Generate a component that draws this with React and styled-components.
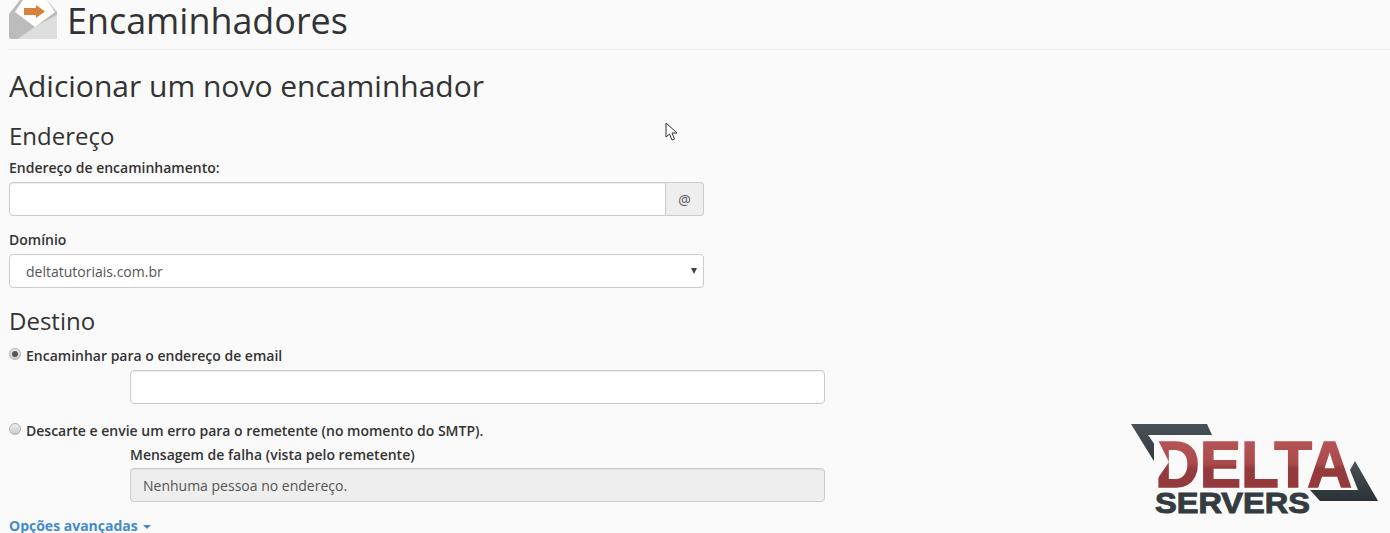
import React from "react";
import styled, { createGlobalStyle } from "styled-components";

const Global = createGlobalStyle`
  html, body { margin: 0; padding: 0; height: 533px; overflow: hidden; background: #fafafa; }
  * { box-sizing: border-box; }
  body { font-family: "Open Sans", "Liberation Sans", sans-serif; color: #333; font-size: 14px; }
`;
const Page = styled.div`position: relative; width: 1390px; height: 533px; overflow: hidden; padding: 0 0 0 9px;`;
const Header = styled.header`display: flex; align-items: flex-start; height: 50px; border-bottom: 1px solid #eee; gap: 10px;`;
const Title = styled.h1`margin: 0; font-size: 35.9px; font-weight: 400; line-height: 42px; color: #333;`;
const Heading = styled.h2`margin: 19px 0 0; font-size: 30px; font-weight: 400; line-height: 34px; color: #333;`;
const Section = styled.h3`margin: ${p => p.$top}px 0 0; font-size: 24px; font-weight: 400; line-height: 30px; color: #333;`;
const Label = styled.label`display: block; font-weight: 600; font-size: 14px; line-height: 20px; margin-top: ${p => p.$top || 0}px; margin-left: ${p => p.$left || 0}px;`;
const Group = styled.div`display: flex; width: 695px; height: 34px; margin-top: 4px;`;
const Input = styled.div`flex: 1; background: #fff; border: 1px solid #ccc; border-radius: 4px 0 0 4px; box-shadow: inset 0 1px 1px rgba(0,0,0,.075);`;
const Addon = styled.div`width: 38px; display: flex; align-items: center; justify-content: center; background: #eee; border: 1px solid #ccc; border-left: 0; border-radius: 0 4px 4px 0; color: #555; font-size: 14px;`;
const Select = styled.div`position: relative; width: 695px; height: 34px; margin-top: 4px; background: #fff; border: 1px solid #ccc; border-radius: 4px; padding: 0 16px; line-height: 33px; color: #555;
  &::after { content: ""; position: absolute; right: 6px; top: 13px; border: 3.5px solid transparent; border-top: 6px solid #444; border-bottom: 0; }`;
const Radio = styled.div`display: flex; align-items: center; gap: 5px; font-weight: 600; line-height: 20px; margin-top: ${p => p.$top}px;`;
const Dot = styled.span`width: 12px; height: 12px; border-radius: 50%; flex: none; position: relative; top: -2px; border: 1px solid #b0b0b0; background: linear-gradient(#eee, #ccc);
  ${p => p.$on && `&::after { content: ""; position: absolute; left: 2px; top: 2px; width: 6px; height: 6px; border-radius: 50%; background: #555; }`}`;
const Field = styled.div`width: 695px; height: 34px; margin: ${p => p.$top}px 0 0 121px; border: 1px solid #ccc; border-radius: 4px; background: ${p => p.$off ? "#eee" : "#fff"}; color: #555; padding: 0 12px; line-height: 33px; box-shadow: inset 0 1px 1px rgba(0,0,0,.075);`;
const Advanced = styled.a`display: flex; align-items: center; gap: 5px; margin-top: 14px; color: #428bca; font-weight: 700; line-height: 20px;
  &::after { content: ""; border: 4px solid transparent; border-top: 4px solid #428bca; border-bottom: 0; margin-top: 1px; }`;
const Logo = styled.svg`position: absolute; left: 1130px; top: 423px;`;
const Cursor = styled.svg`position: absolute; left: 665px; top: 122px;`;

const EnvelopeIcon = () => (
  <svg width="48" height="39" viewBox="0 0 48 39">
    <path d="M0 14 L11 0 H38 L48 12 V37 a2 2 0 0 1-2 2 H2 a2 2 0 0 1-2-2Z" fill="#bcbcbc" />
    <path d="M9 39 L27 26 L48 15 V37 a2 2 0 0 1-2 2Z" fill="#dedede" />
    <path d="M14 0 H38 L46 12 L26 27 L6 12Z" fill="#fff" />
    <path d="M15 8 H27 V5 L36 11.5 L27 18 V15 H15Z" fill="#d9813a" />
  </svg>
);

export default function App() {
  return (
    <Page>
      <Global />
      <Header><EnvelopeIcon /><Title>Encaminhadores</Title></Header>
      <Heading>Adicionar um novo encaminhador</Heading>
      <Section $top={18}>Endereço</Section>
      <Label $top={7}>Endereço de encaminhamento:</Label>
      <Group><Input /><Addon>@</Addon></Group>
      <Label $top={14}>Domínio</Label>
      <Select>deltatutoriais.com.br</Select>
      <Section $top={18}>Destino</Section>
      <Radio $top={10}><Dot $on />Encaminhar para o endereço de email</Radio>
      <Field $top={4} />
      <Radio $top={17}><Dot />Descarte e envie um erro para o remetente (no momento do SMTP).</Radio>
      <Label $top={4} $left={121}>Mensagem de falha (vista pelo remetente)</Label>
      <Field $top={3} $off>Nenhuma pessoa no endereço.</Field>
      <Advanced>Opções avançadas</Advanced>
      <Cursor width="14" height="20" viewBox="0 0 14 20">
        <path d="M1 1 V15 L4.5 12 L7 18 L9.5 17 L7 11 L12 11 Z" fill="#fff" stroke="#333" strokeWidth="1" />
      </Cursor>
      <Logo width="250" height="100" viewBox="0 0 250 100">
        <defs>
          <linearGradient id="red" gradientUnits="userSpaceOnUse" x1="0" y1="17" x2="0" y2="64">
            <stop offset="0" stopColor="#b65557" /><stop offset="0.5" stopColor="#ab4a4c" /><stop offset="0.6" stopColor="#953b3d" /><stop offset="1" stopColor="#943a3c" />
          </linearGradient>
          <linearGradient id="dark" x1="0" y1="0" x2="0" y2="1">
            <stop offset="0" stopColor="#4a5258" /><stop offset="1" stopColor="#2a3137" />
          </linearGradient>
        </defs>
        <path d="M1 1 H77 L82 12 H18 L37 39 L30 48Z" fill="url(#dark)" />
        <path d="M225 38 L248 78 H190 L180 67 H228 L220 47Z" fill="url(#dark)" />
        <text x="25" y="64" fontFamily="Liberation Sans" fontWeight="700" fontSize="65" fill="url(#red)" stroke="url(#red)" strokeWidth="1.6" textLength="197" lengthAdjust="spacingAndGlyphs">DELTA</text>
        <path d="M24 15 H27 L39 39 L28 55 H24Z" fill="#fafafa" />
        <text x="25" y="90" fontFamily="Liberation Sans" fontWeight="700" fontSize="30" fill="#343b41" stroke="#343b41" strokeWidth="1" textLength="155" lengthAdjust="spacingAndGlyphs">SERVERS</text>
      </Logo>
    </Page>
  );
}
